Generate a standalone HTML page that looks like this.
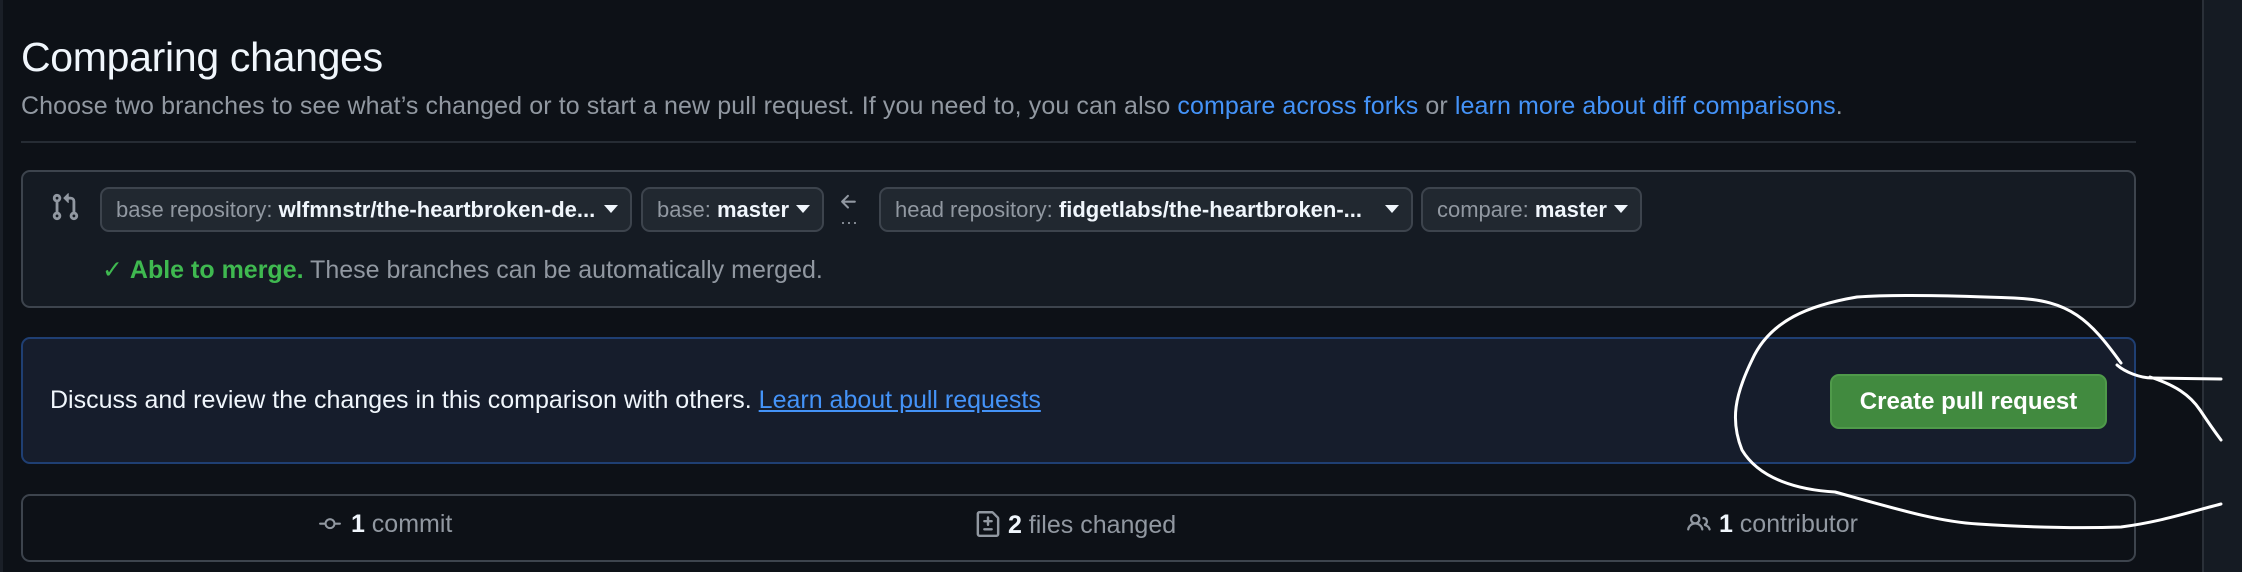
<!DOCTYPE html>
<html><head><meta charset="utf-8">
<style>
*{box-sizing:border-box;margin:0;padding:0}
html,body{width:2242px;height:572px;overflow:hidden;background:#0d1117;font-family:"Liberation Sans",sans-serif;color:#f0f6fc}
.abs{position:absolute}
h1{position:absolute;left:21px;top:34px;font-size:41px;font-weight:400;color:#f0f6fc;letter-spacing:-0.3px}
.sub{left:21px;top:92px;font-size:25px;letter-spacing:0.1px;color:#9198a1;white-space:nowrap}
.sub a{color:#4493f8;text-decoration:none}
.box{border:2px solid #3d444d;border-radius:9px}
.btn{position:absolute;top:187px;height:45px;background:#212830;border:2px solid #3d444d;border-radius:9px;font-size:22px;color:#9198a1;padding-left:14px;line-height:41px;white-space:nowrap;overflow:hidden}
.btn b{color:#f0f6fc;font-weight:700}
.btn .caret{position:absolute;right:12px;top:16px;width:0;height:0;border-left:7px solid transparent;border-right:7px solid transparent;border-top:8px solid #f0f6fc}
.stat{position:absolute;top:510px;font-size:25px;color:#9198a1;white-space:nowrap}
.stat b{color:#f0f6fc}
</style></head><body>
<div class="abs" style="left:0;top:0;width:3px;height:572px;background:#1a1f27"></div>
<div class="abs" style="left:2202px;top:0;width:40px;height:572px;background:#151b23;border-left:2px solid #2a3038"></div>
<h1>Comparing changes</h1>
<div class="abs sub">Choose two branches to see what’s changed or to start a new pull request. If you need to, you can also <a>compare across forks</a> or <a>learn more about diff comparisons</a>.</div>
<div class="abs" style="left:21px;top:141px;width:2115px;height:2px;background:#262c34"></div>

<div class="abs box" style="left:21px;top:170px;width:2115px;height:138px;background:#151b23"></div>
<svg class="abs" style="left:50px;top:192px" width="30" height="30" viewBox="0 0 16 16" fill="#9198a1"><path d="M1.5 3.25a2.25 2.25 0 1 1 3 2.122v5.256a2.251 2.251 0 1 1-1.5 0V5.372A2.25 2.25 0 0 1 1.5 3.25Zm5.677-.177L9.573.677A.25.25 0 0 1 10 .854V2.5h1A2.5 2.5 0 0 1 13.5 5v5.628a2.251 2.251 0 1 1-1.5 0V5a1 1 0 0 0-1-1h-1v1.646a.25.25 0 0 1-.427.177L7.177 3.427a.25.25 0 0 1 0-.354ZM3.750 2.5a.75.75 0 1 0 0 1.5.75.75 0 0 0 0-1.5Zm0 9.5a.75.75 0 1 0 0 1.5.75.75 0 0 0 0-1.5Zm8.25.75a.75.75 0 1 0 1.5 0 .75.75 0 0 0-1.5 0Z"/></svg>
<div class="btn" style="left:100px;width:532px">base repository: <b>wlfmnstr/the-heartbroken-de...</b><span class="caret"></span></div>
<div class="btn" style="left:641px;width:183px">base: <b>master</b><span class="caret"></span></div>
<svg class="abs" style="left:838px;top:191px" width="22" height="22" viewBox="0 0 16 16" fill="#9198a1"><path d="M7.78 12.53a.75.75 0 0 1-1.06 0L2.47 8.28a.75.75 0 0 1 0-1.06l4.25-4.25a.751.751 0 0 1 1.042.018.751.751 0 0 1 .018 1.042L4.81 7h7.44a.75.75 0 0 1 0 1.5H4.81l2.97 2.97a.75.75 0 0 1 0 1.06Z"/></svg>
<div class="abs" style="left:840px;top:212px;font-size:18px;color:#9198a1">···</div>
<div class="btn" style="left:879px;width:534px">head repository: <b>fidgetlabs/the-heartbroken-...</b><span class="caret"></span></div>
<div class="btn" style="left:1421px;width:221px">compare: <b>master</b><span class="caret"></span></div>
<div class="abs" style="left:102px;top:255px;font-size:25px;color:#9198a1;white-space:nowrap"><span style="color:#3fb950">✓ <b>Able to merge.</b></span> These branches can be automatically merged.</div>

<div class="abs" style="left:21px;top:337px;width:2115px;height:127px;background:#161d2c;border:2px solid #1f3f73;border-radius:9px"></div>
<div class="abs" style="left:50px;top:386px;font-size:25px;color:#f0f6fc;white-space:nowrap">Discuss and review the changes in this comparison with others. <a style="color:#4493f8;text-decoration:underline">Learn about pull requests</a></div>
<div class="abs" style="left:1830px;top:374px;width:277px;height:55px;background:#418a3f;border:2px solid #4f9a4a;border-radius:9px;color:#fff;font-weight:700;font-size:24px;text-align:center;line-height:51px">Create pull request</div>

<div class="abs box" style="left:21px;top:494px;width:2115px;height:68px"></div>
<div class="stat" style="left:316px"><svg width="28" height="22" viewBox="0 0 16 16" fill="#9198a1" style="vertical-align:-3px"><path d="M11.93 8.5a4.002 4.002 0 0 1-7.86 0H.75a.75.75 0 0 1 0-1.5h3.32a4.002 4.002 0 0 1 7.86 0h3.32a.75.75 0 0 1 0 1.5Zm-1.43-.75a2.5 2.5 0 1 0-5 0 2.5 2.5 0 0 0 5 0Z"/></svg> <b>1</b> commit</div>
<div class="stat" style="left:975px"><svg width="26" height="28" viewBox="0 0 16 16" fill="#9198a1" style="vertical-align:-5px"><path d="M1 1.75C1 .784 1.784 0 2.750 0h7.586c.464 0 .909.184 1.237.513l2.914 2.914c.329.328.513.773.513 1.237v9.586A1.75 1.75 0 0 1 13.25 16H2.75A1.75 1.75 0 0 1 1 14.25Zm1.75-.25a.25.25 0 0 0-.25.25v12.5c0 .138.112.25.25.25h10.5a.25.25 0 0 0 .25-.25V4.664a.25.25 0 0 0-.073-.177l-2.914-2.914a.25.25 0 0 0-.177-.073ZM8 3.25a.75.75 0 0 1 .75.75v1.5h1.5a.75.75 0 0 1 0 1.5h-1.5v1.5a.75.75 0 0 1-1.5 0V7h-1.5a.75.75 0 0 1 0-1.5h1.5V4A.75.75 0 0 1 8 3.25Zm-3 8a.75.75 0 0 1 .75-.75h4.5a.75.75 0 0 1 0 1.5h-4.5a.75.75 0 0 1-.75-.75Z"/></svg> <b>2</b> files changed</div>
<div class="stat" style="left:1686px"><svg width="26" height="24" viewBox="0 0 16 16" fill="#9198a1" style="vertical-align:-3px"><path d="M2 5.5a3.5 3.5 0 1 1 5.898 2.549 5.508 5.508 0 0 1 3.034 4.084.75.75 0 1 1-1.482.235 4 4 0 0 0-7.9 0 .75.75 0 0 1-1.482-.236A5.507 5.507 0 0 1 3.102 8.050 3.493 3.493 0 0 1 2 5.5ZM11 4a3.001 3.001 0 0 1 2.22 5.018 5.01 5.01 0 0 1 2.56 3.012.749.749 0 0 1-.885.954.752.752 0 0 1-.549-.514 3.507 3.507 0 0 0-2.522-2.372.75.75 0 0 1-.574-.73v-.352a.75.75 0 0 1 .416-.672A1.5 1.5 0 0 0 11 5.5.75.75 0 0 1 11 4Zm-5.5-.5a2 2 0 1 0-.001 3.999A2 2 0 0 0 5.5 3.5Z"/></svg> <b>1</b> contributor</div>

<svg class="abs" style="left:0;top:0" width="2242" height="572" fill="none" stroke="#fff" stroke-width="3" stroke-linecap="round">
<path d="M2121 363 C2090 320 2070 300 2014 298 C1960 296 1900 294 1857 297 C1810 305 1770 320 1752 360 C1735 395 1730 420 1742 450 C1760 480 1800 490 1835 492 C1900 510 1940 522 1978 524 C2040 528 2090 528 2121 527 C2160 522 2190 512 2221 504"/>
<path d="M2117 365 C2125 372 2140 378 2152 378 L2221 379"/>
<path d="M2150 377 C2175 385 2190 395 2200 410 C2210 425 2215 432 2221 440"/>
</svg>
</body></html>
